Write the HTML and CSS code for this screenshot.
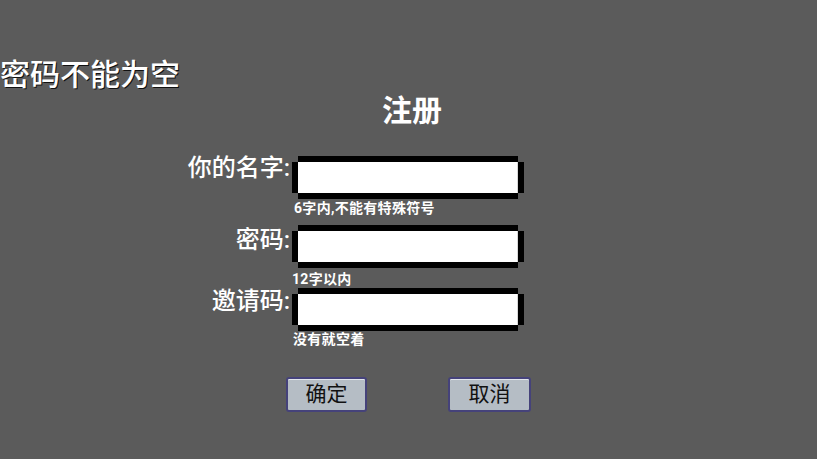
FILE: index.html
```html
<!DOCTYPE html>
<html lang="zh">
<head>
<meta charset="utf-8">
<title>注册</title>
<link rel="stylesheet" href="styles.css">
</head>
<body>
<div class="screen">
  <div class="error">密码不能为空</div>
  <div class="title">注册</div>
  <div class="form">
    <div class="row row-1">
      <label class="label">你的名字:</label>
      <div class="field">
        <input class="input" type="text">
        <div class="hint">6字内,不能有特殊符号</div>
      </div>
    </div>
    <div class="row row-2">
      <label class="label">密码:</label>
      <div class="field">
        <input class="input" type="password">
        <div class="hint">12字以内</div>
      </div>
    </div>
    <div class="row row-3">
      <label class="label">邀请码:</label>
      <div class="field">
        <input class="input" type="text">
        <div class="hint">没有就空着</div>
      </div>
    </div>
  </div>
  <div class="actions">
    <button class="btn">确定</button>
    <button class="btn btn-wide">取消</button>
  </div>
</div>
</body>
</html>
```

FILE: styles.css
```css
html, body {
  margin: 0;
  padding: 0;
  background: #5b5b5b;
}

.screen {
  width: 817px;
  height: 459px;
  overflow: hidden;
  font-family: "Roboto", "Noto Sans CJK SC", sans-serif;
  color: #ffffff;
}

.error {
  margin-top: 60px;
  font-size: 30px;
  line-height: 30px;
  font-weight: 500;
  text-shadow: 1px 1px 0 #111111;
  white-space: nowrap;
}

.title {
  margin-top: 6px;
  padding-left: 7px;
  text-align: center;
  font-size: 30px;
  line-height: 30px;
  font-weight: 700;
}

.form {
  margin-top: 30px;
  display: flex;
  flex-direction: column;
}

.row {
  display: grid;
  grid-template-columns: 290px 220px;
  column-gap: 8px;
  align-items: start;
}

.row-2 { margin-top: 10px; }
.row-3 { margin-top: 2px; }

.label {
  text-align: right;
  font-size: 24px;
  line-height: 24px;
  font-weight: 500;
  white-space: nowrap;
}

.row-2 .label { margin-top: 3px; }
.row-3 .label { margin-top: 1px; }

.field {
  display: flex;
  flex-direction: column;
  padding-top: 6px;
}

.input {
  display: block;
  box-sizing: border-box;
  width: 220px;
  height: 31px;
  margin: 0;
  padding: 0 4px;
  border: 0;
  border-right: 1px solid #d8d8d8;
  outline: none;
  background: #ffffff;
  box-shadow: 0 -6px 0 #000000, 0 6px 0 #000000, -6px 0 0 #000000, 6px 0 0 #000000;
  font-family: inherit;
  font-size: 16px;
}

.hint {
  margin-top: 8px;
  margin-left: -4px;
  font-size: 14px;
  line-height: 14px;
  font-weight: 700;
  letter-spacing: 0.3px;
  white-space: nowrap;
}

.row-2 .hint { margin-top: 10px; margin-left: -6px; }
.row-3 .hint { margin-top: 7px; margin-left: -5px; }

.actions {
  display: flex;
  gap: 81px;
  margin-top: 31px;
  padding-left: 286px;
}

.btn {
  box-sizing: border-box;
  width: 81px;
  height: 35px;
  margin: 0;
  padding: 0;
  border: 2px solid #45427a;
  border-radius: 3px;
  background: #b5bdc5;
  box-shadow: inset 0 1px 0 #e2e6ec;
  font-family: "Roboto", "Noto Sans CJK SC", sans-serif;
  font-size: 21px;
  line-height: 29px;
  font-weight: 400;
  color: #111111;
}

.btn-wide {
  width: 83px;
}
```
